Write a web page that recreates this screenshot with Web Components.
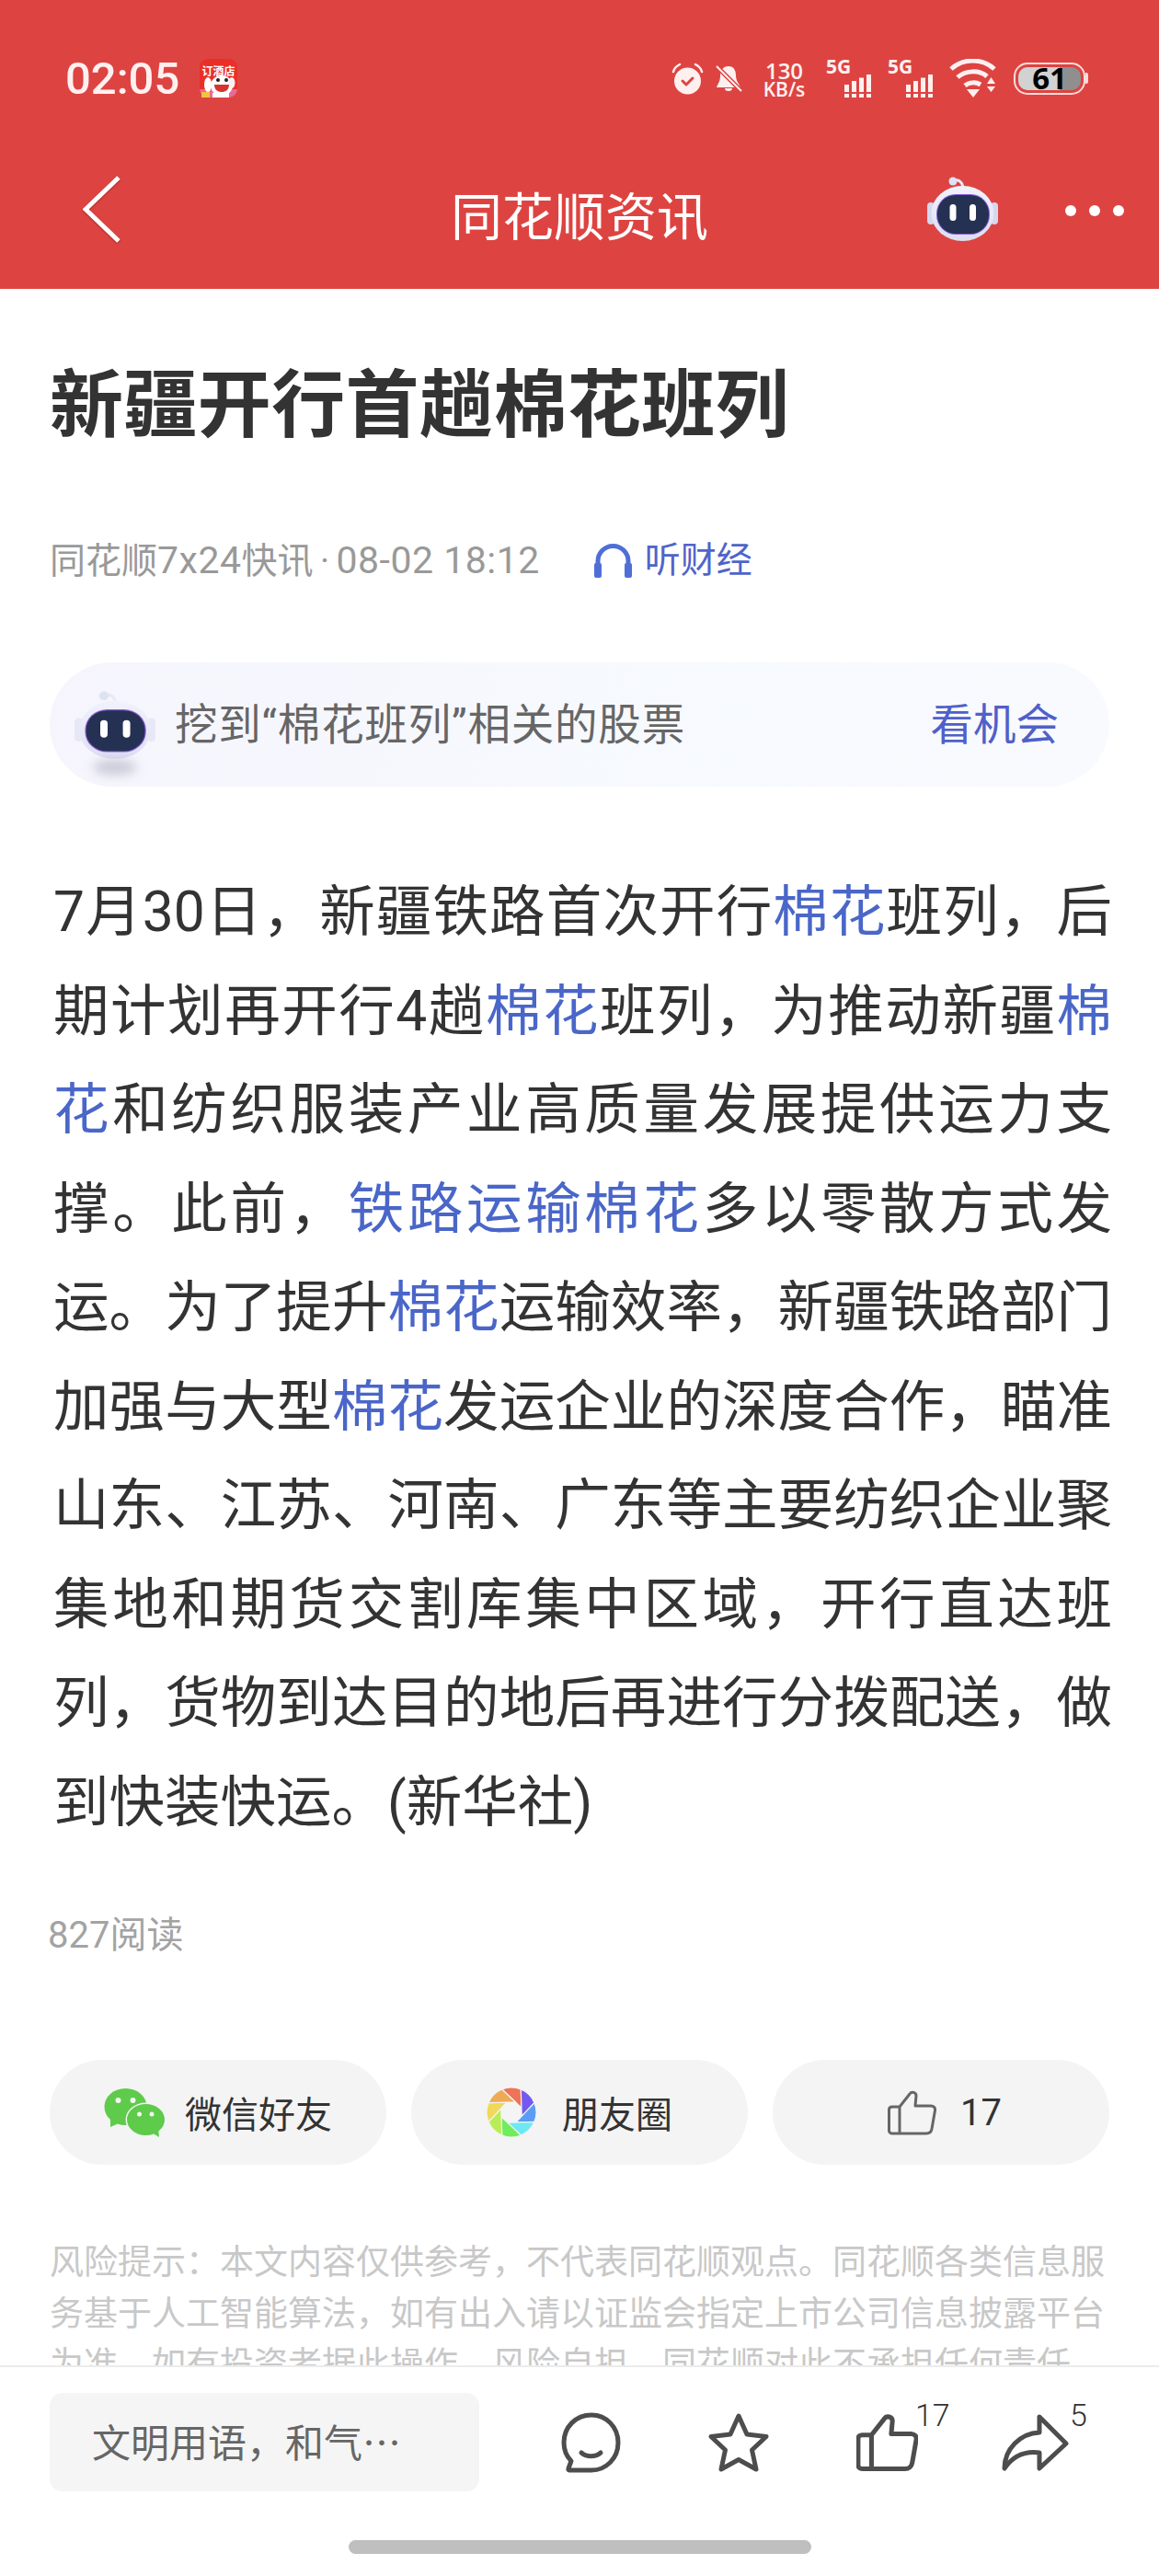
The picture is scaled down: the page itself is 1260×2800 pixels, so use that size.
<!DOCTYPE html>
<html lang="zh-CN">
<head>
<meta charset="utf-8">
<title>同花顺资讯</title>
<style>
  html, body { margin: 0; background: #fff; }
  body {
    font-family: Roboto, "Noto Sans CJK SC", sans-serif;
    color: #333;
  }
</style>
</head>
<body>
<news-app></news-app>

<script>
// every component is a template cloned into an open shadow root
function define(name, html) {
  const template = document.createElement('template');
  template.innerHTML = html;
  customElements.define(name, class extends HTMLElement {
    constructor() {
      super();
      this.attachShadow({ mode: 'open' });
      this.shadowRoot.appendChild(template.content.cloneNode(true));
    }
  });
}

const thumbPath = 'M13 47V18L24 4C26 1 31 2 31 6L30 17H47C50 17 52 19 51.5 22L48 42C47.5 45 45 47 42 47H5C3 47 1.5 45.5 1.5 44V21C1.5 19 3 18 5 18H13';

define('robot-icon', `
  <style>
    :host { display: block; width: 77px; height: 70px; }
    svg { display: block; width: 100%; height: 100%; overflow: visible; }
  </style>
  <svg viewBox="0 0 77 70" preserveAspectRatio="none">
    <defs>
      <linearGradient id="shell" x1="0" y1="0" x2="0" y2="1">
        <stop offset="0" stop-color="#f1f2fc"/>
        <stop offset="1" stop-color="#dcdff2"/>
      </linearGradient>
    </defs>
    <path d="M28 5C33 2 38 5 39 12" fill="none" stroke="#e8e9f6" stroke-width="3"/>
    <circle cx="28" cy="5" r="4.5" fill="#dfe1f4"/>
    <rect x="0" y="28" width="8" height="24" rx="4" fill="var(--ear, #d5d8ef)"/>
    <rect x="69" y="28" width="8" height="24" rx="4" fill="var(--ear, #d5d8ef)"/>
    <ellipse cx="38.5" cy="40" rx="34" ry="30" fill="url(#shell)"/>
    <rect x="10" y="19" width="58" height="44" rx="21" fill="#8d5fd8"/>
    <rect x="11" y="20" width="56" height="42" rx="20" fill="#253152"/>
    <rect x="24.5" y="30" width="7" height="18" rx="3.5" fill="#fff"/>
    <rect x="46" y="30" width="7" height="18" rx="3.5" fill="#fff"/>
  </svg>
`);

define('status-bar', `
  <style>
    :host {
      display: flex;
      align-items: center;
      box-sizing: border-box;
      height: 140px;
      padding: 30px 77px 0 71px;
      color: #fff0f0;
    }
    svg { display: block; flex: none; }
    .time { font: 500 49px/1 Roboto, sans-serif; }
    .notice { margin-left: 22px; }
    .right { margin-left: auto; display: flex; align-items: center; }
    .alarm { margin-right: 12px; }
    .speed { width: 49px; margin: 0 21px; text-align: center; }
    .speed b { display: block; font: 600 24px/24px "Open Sans", sans-serif; height: 24px; }
    .speed span { display: block; margin: 0 -3px; font: 600 21px/16px "Open Sans", sans-serif; white-space: nowrap; }
    .net { width: 49px; margin-right: 18px; height: 42px; display: flex; flex-direction: column; }
    .net span { font: 700 21px/16px "Open Sans", sans-serif; }
    .net svg { align-self: flex-end; margin-top: 1px; }
    .wifi { margin-right: 19px; }
    .battery { display: flex; align-items: center; }
    .shell {
      box-sizing: border-box;
      width: 78px;
      height: 35px;
      border: 2.5px solid #fbdcdc;
      border-radius: 15px;
      padding: 3px;
      display: flex;
    }
    .level {
      flex: 1;
      border-radius: 10px;
      background: linear-gradient(90deg, #d2d2d2 66%, #8f8f8f 66%);
      color: #000;
      font: 700 33px/23px "Open Sans", sans-serif;
      text-align: center;
    }
    .nub { width: 3px; height: 12px; background: #fbdcdc; border-radius: 0 2px 2px 0; }
  </style>
  <span class="time">02:05</span>
  <svg class="notice" width="41" height="42" viewBox="0 0 41 42">
    <rect width="41" height="42" rx="9" fill="#ea2f27"/>
    <path d="M0 33h41v0a9 9 0 0 1-9 9H9a9 9 0 0 1-9-9z" fill="#e86a98"/>
    <ellipse cx="24" cy="29" rx="12" ry="11" fill="#fff"/>
    <ellipse cx="9" cy="28" rx="4" ry="8" fill="#fff"/>
    <ellipse cx="35" cy="26" rx="3.500" ry="6" fill="#f4f1f6"/>
    <circle cx="20" cy="23" r="2" fill="#222"/>
    <circle cx="29" cy="23" r="2" fill="#222"/>
    <path d="M16 28h16c0 6-4 8-8 8s-8-2-8-8z" fill="#d8342f"/>
    <rect x="2" y="36" width="9" height="6" fill="#f5c23f"/>
    <rect x="14" y="37" width="18" height="5" fill="#fff"/>
    <text x="20.500" y="18" text-anchor="middle" font-size="12" font-weight="700" fill="#fff" font-family="Noto Sans CJK SC">订酒店</text>
  </svg>
  <div class="right">
    <svg class="alarm" width="35" height="35" viewBox="0 0 35 35">
      <circle cx="17.5" cy="20" r="14.5" fill="#fff0f0"/>
      <path d="M2 10C3 6 5 4 9 2M33 10C32 6 30 4 26 2" fill="none" stroke="#fff0f0" stroke-width="2.5" stroke-linecap="round"/>
      <path d="M12 20l4 4 7-7" fill="none" stroke="#dd4441" stroke-width="3" stroke-linecap="round" stroke-linejoin="round"/>
    </svg>
    <svg width="30" height="29" viewBox="0 0 30 29">
      <path d="M15 1C21 1 23 6 23 11C23 17 26 19 28 24H2C4 19 6 17 6 11C6 6 9 1 15 1Z" fill="#fff0f0"/>
      <path d="M11 25h8a4 3 0 0 1-8 0z" fill="#fff0f0"/>
      <path d="M1 0L29 28" stroke="#dd4441" stroke-width="5"/>
      <path d="M2 1L29 28" stroke="#fff0f0" stroke-width="2"/>
    </svg>
    <div class="speed"><b>130</b><span>KB/s</span></div>
    <div class="net">
      <span>5G</span>
      <svg width="29" height="25" viewBox="0 0 29 25" fill="#fff0f0">
        <path d="M0 11h5v8H0zM8 7h5v12H8zM16 3.500h5v15.500h-5zM24 0h5v19h-5zM0 21h5v4H0zM8 21h5v4H8zM16 21h5v4h-5zM24 21h5v4h-5z"/>
      </svg>
    </div>
    <div class="net">
      <span>5G</span>
      <svg width="29" height="25" viewBox="0 0 29 25" fill="#fff0f0">
        <path d="M0 11h5v8H0zM8 7h5v12H8zM16 3.500h5v15.500h-5zM24 0h5v19h-5zM0 21h5v4H0zM8 21h5v4H8zM16 21h5v4h-5zM24 21h5v4h-5z"/>
      </svg>
    </div>
    <svg class="wifi" width="51" height="42" viewBox="0 0 51 42">
      <g fill="none" stroke="#fff0f0" stroke-width="5">
        <path d="M2 11C15 -1 36 -1 49 11"/>
        <path d="M9 20C18 12 33 12 41 19"/>
        <path d="M17 29C22 25 29 25 34 28"/>
      </g>
      <path d="M19 33H33L26 42Z" fill="#fff0f0"/>
      <path d="M41 27H50L45.500 20ZM41 30H50L45.500 36Z" fill="#fff0f0"/>
    </svg>
    <div class="battery">
      <div class="shell"><div class="level">61</div></div>
      <div class="nub"></div>
    </div>
  </div>
`);

define('nav-bar', `
  <style>
    :host {
      display: grid;
      grid-template-columns: 1fr auto 1fr;
      align-items: center;
      height: 174px;
      padding: 0 38px;
      color: #fff;
    }
    svg { display: block; }
    .back { margin-left: 52px; filter: drop-shadow(0 1px 1px rgba(90,0,0,.4)); }
    h1 { margin: 10px 0 0; font: 400 56px/1 "Noto Sans CJK SC", sans-serif; }
    .actions { display: flex; align-items: center; justify-content: flex-end; }
    robot-icon { margin-right: 73px; }
    .dots { display: flex; gap: 14px; margin-top: 4px; }
    .dots i { display: block; width: 12px; height: 12px; border-radius: 50%; background: #fff; }
  </style>
  <svg class="back" width="41" height="73" viewBox="0 0 41 73">
    <path d="M39 2L3 36.500L39 71" fill="none" stroke="#fff" stroke-width="5"/>
  </svg>
  <h1>同花顺资讯</h1>
  <div class="actions">
    <robot-icon></robot-icon>
    <div class="dots"><i></i><i></i><i></i></div>
  </div>
`);

define('article-meta', `
  <style>
    :host {
      display: flex;
      align-items: center;
      height: 50px;
      font-size: 39px;
      line-height: 50px;
      color: #999;
      white-space: nowrap;
    }
    i { font-style: normal; font-size: 41px; letter-spacing: .5px; }
    u { display: inline-block; width: 25px; text-align: center; text-decoration: none; }
    svg { margin-left: 59px; margin-right: 14px; flex: none; }
    a { color: #4f64c9; text-decoration: none; }
  </style>
  <span>同花顺<i>7x24</i>快讯<u>·</u><i>08-02 18:12</i></span>
  <svg width="41" height="38" viewBox="0 0 41 38">
    <path d="M4 36V20A16.500 16.500 0 0 1 37 20V36" fill="none" stroke="#4f6fd6" stroke-width="5"/>
    <rect x="0" y="22" width="8" height="16" rx="2" fill="#4f6fd6"/>
    <rect x="33" y="22" width="8" height="16" rx="2" fill="#4f6fd6"/>
  </svg>
  <a>听财经</a>
`);

define('promo-pill', `
  <style>
    :host {
      display: flex;
      align-items: center;
      box-sizing: border-box;
      height: 135px;
      margin-right: 0;
      padding: 0 55px 0 27px;
      border-radius: 68px;
      background: linear-gradient(100deg, #f6f5fd, #f6f9fe 50%, #f8fafe);
      font-size: 46.5px;
      line-height: 60px;
      color: #666;
      white-space: nowrap;
    }
    .bot { position: relative; width: 88px; height: 74px; flex: none; --ear: #e6e8f5; }
    .bot::after {
      content: "";
      position: absolute;
      left: 20px; right: 20px; bottom: -17px;
      height: 16px;
      border-radius: 50%;
      background: #b5b7c6;
      filter: blur(6px);
      opacity: .7;
    }
    robot-icon { width: 88px; height: 74px; }
    span { margin-left: 21px; flex: 1; letter-spacing: .8px; }
    a { color: #5060c8; text-decoration: none; }
  </style>
  <div class="bot"><robot-icon></robot-icon></div>
  <span>挖到“棉花班列”相关的股票</span>
  <a>看机会</a>
`);

define('article-body', `
  <style>
    :host {
      display: block;
      margin: 0 -3px 0 4px;
      font-size: 60.5px;
      line-height: 107.5px;
      text-align: justify;
      color: #333;
      line-break: strict;
    }
    ::slotted(a) { color: #4a66c8; text-decoration: none; }
  </style>
  <slot></slot>
`);

define('share-btn', `
  <style>
    :host {
      display: flex;
      align-items: center;
      justify-content: center;
      gap: var(--gap, 22px);
      height: 114px;
      border-radius: 57px;
      background: #f4f4f4;
      font-size: 40px;
      color: #333;
    }
    ::slotted(svg) { display: block; flex: none; }
  </style>
  <slot name="icon"></slot>
  <slot></slot>
`);

define('share-row', `
  <style>
    :host {
      display: grid;
      grid-template-columns: repeat(3, 1fr);
      gap: 27px;
    }
  </style>
  <slot></slot>
`);

define('risk-note', `
  <style>
    :host {
      display: block;
      font-size: 37px;
      line-height: 55.5px;
      color: #c8c8c8;
    }
  </style>
  <slot></slot>
`);

define('bar-action', `
  <style>
    :host { display: block; position: relative; flex: none; }
    ::slotted(svg) { display: block; }
    b {
      position: absolute;
      left: calc(100% + 1px);
      top: -16px;
      font: 300 34px/34px Roboto, sans-serif;
      color: #333;
    }
  </style>
  <slot></slot>
  <b><slot name="count"></slot></b>
`);

define('comment-bar', `
  <style>
    :host {
      display: block;
      box-sizing: border-box;
      height: 229px;
      border-top: 2px solid #ececec;
      background: #fff;
      flex: none;
    }
    .row { display: flex; align-items: center; padding: 28px 0 0 54px; }
    .input {
      box-sizing: border-box;
      width: 467px;
      height: 107px;
      padding-left: 46px;
      border-radius: 14px;
      background: #f5f5f5;
      font: 42px/103px "Noto Sans CJK SC", sans-serif;
      color: #666;
      white-space: nowrap;
    }
    .icons { display: flex; align-items: center; }
    .home {
      width: 503px;
      height: 15px;
      margin: 53px auto 0;
      border-radius: 8px;
      background: #bfbfbf;
    }
  </style>
  <div class="row">
    <div class="input">文明用语，和气…</div>
    <div class="icons"><slot></slot></div>
  </div>
  <div class="home"></div>
`);

// the aperture blades are the same wedge turned eight times
class MomentsMark extends HTMLElement {
  constructor() {
    super();
    this.attachShadow({ mode: 'open' });
    const colors = ['#ee7359', '#7359f0', '#5a9df5', '#6ee8f5', '#6fed5b', '#b8ee55', '#f0d95a', '#eeaa55'];
    const R = 27, r = 12;
    const at = (rad, deg) => {
      const a = deg * Math.PI / 180;
      return (27 + rad * Math.cos(a)).toFixed(2) + ' ' + (27 + rad * Math.sin(a)).toFixed(2);
    };
    const blades = colors.map((color, i) => {
      const mid = -46.7 + i * 45;
      return `<path d="M${at(R, mid - 65.8)}A${R} ${R} 0 0 1 ${at(R, mid - 20.8)}L${at(r, mid + 22.5)}Z" fill="${color}" stroke="#f4f4f4" stroke-width="1.2"/>`;
    }).join('');
    this.shadowRoot.innerHTML = `
      <style>
        :host { display: block; width: 54px; height: 54px; flex: none; }
        svg { display: block; }
      </style>
      <svg width="54" height="54" viewBox="0 0 54 54">${blades}</svg>
    `;
  }
}
customElements.define('moments-mark', MomentsMark);

define('news-app', `
  <style>
    :host {
      display: flex;
      flex-direction: column;
      width: 1260px;
      height: 2800px;
      overflow: hidden;
    }
    .top { background: #dd4441; flex: none; }
    .scroll { flex: 1; min-height: 0; overflow: hidden; padding: 0 54px; }
    h2 { margin: 69px 0 0; font: 700 80px/100px "Noto Sans CJK SC", sans-serif; letter-spacing: .4px; color: #333; }
    article-meta { margin-top: 101px; }
    promo-pill { margin-top: 86px; }
    article-body { margin-top: 83px; }
    .reads { margin: 66px 0 0 -2px; font-size: 40px; line-height: 50px; color: #a3a3a3; }
    share-row { margin-top: 110px; }
    risk-note { margin-top: 79px; }
  </style>
  <div class="top">
    <status-bar></status-bar>
    <nav-bar></nav-bar>
  </div>
  <div class="scroll">
    <h2>新疆开行首趟棉花班列</h2>
    <article-meta></article-meta>
    <promo-pill></promo-pill>
    <article-body>7月30日，新疆铁路首次开行<a>棉花</a>班列，后期计划再开行4趟<a>棉花</a>班列，为推动新疆<a>棉花</a>和纺织服装产业高质量发展提供运力支撑。此前，<a>铁路运输棉花</a>多以零散方式发运。为了提升<a>棉花</a>运输效率，新疆铁路部门加强与大型<a>棉花</a>发运企业的深度合作，瞄准山东、江苏、河南、广东等主要纺织企业聚集地和期货交割库集中区域，开行直达班列，货物到达目的地后再进行分拨配送，做到快装快运。(新华社)</article-body>
    <div class="reads">827阅读</div>
    <share-row>
      <share-btn>
        <svg slot="icon" width="66" height="53" viewBox="0 0 66 53">
          <ellipse cx="23.500" cy="20" rx="23" ry="20" fill="#5ecb4a"/>
          <path d="M7 32L7 42L18 37Z" fill="#5ecb4a"/>
          <ellipse cx="45.500" cy="34" rx="22" ry="18.500" fill="#f4f4f4"/>
          <ellipse cx="45.500" cy="34" rx="20.500" ry="17" fill="#5ecb4a"/>
          <path d="M52 48L60 53L59 44Z" fill="#5ecb4a"/>
          <circle cx="15.500" cy="13" r="3" fill="#f4f4f4"/>
          <circle cx="31.500" cy="13" r="3" fill="#f4f4f4"/>
          <circle cx="38.500" cy="28" r="2.500" fill="#f4f4f4"/>
          <circle cx="52" cy="28" r="2.500" fill="#f4f4f4"/>
        </svg>
        微信好友
      </share-btn>
      <share-btn style="--gap:28px">
        <moments-mark slot="icon"></moments-mark>
        朋友圈
      </share-btn>
      <share-btn style="--gap:26px;padding-left:8px">
        <svg slot="icon" width="53" height="49" viewBox="0 0 53 49">
          <path d="${thumbPath}" fill="none" stroke="#666" stroke-width="3" stroke-linejoin="round"/>
        </svg>
        17
      </share-btn>
    </share-row>
    <risk-note>风险提示：本文内容仅供参考，不代表同花顺观点。同花顺各类信息服务基于人工智能算法，如有出入请以证监会指定上市公司信息披露平台为准，如有投资者据此操作，风险自担，同花顺对此不承担任何责任。</risk-note>
  </div>
  <comment-bar>
    <bar-action style="margin-left:89px">
      <svg width="65" height="66" viewBox="0 0 65 66">
        <path d="M33 3C49 3 62 16 62 33S49 63 33 63H9C8 63 7.500 62 8 61L11 53C6 48 3 41 3 33C3 16 16 3 33 3Z" fill="none" stroke="#4d4d4d" stroke-width="5" stroke-linejoin="round"/>
        <path d="M22 44C28 49 37 49 43 44" fill="none" stroke="#4d4d4d" stroke-width="5" stroke-linecap="round"/>
      </svg>
    </bar-action>
    <bar-action style="margin-left:94px">
      <svg width="68" height="67" viewBox="0 0 68 67">
        <path d="M34 5L43 25L64 27.500L48.500 42L53 63L34 52.500L15 63L19.500 42L4 27.500L25 25Z" fill="none" stroke="#4d4d4d" stroke-width="5" stroke-linejoin="round"/>
      </svg>
    </bar-action>
    <bar-action style="margin-left:94px">
      <svg width="67" height="62" viewBox="0 0 53 49">
        <path d="${thumbPath}" fill="none" stroke="#4d4d4d" stroke-width="4" stroke-linejoin="round"/>
      </svg>
      <span slot="count" style="margin-left:-4px">17</span>
    </bar-action>
    <bar-action style="margin-left:91px">
      <svg width="73" height="62" viewBox="0 0 73 62">
        <path d="M41 3L70 32L41 59V42C25 40 12 46 3 59C3 38 20 21 41 20Z" fill="none" stroke="#4d4d4d" stroke-width="5" stroke-linejoin="round"/>
      </svg>
      <span slot="count">5</span>
    </bar-action>
  </comment-bar>
`);
</script>
</body>
</html>
